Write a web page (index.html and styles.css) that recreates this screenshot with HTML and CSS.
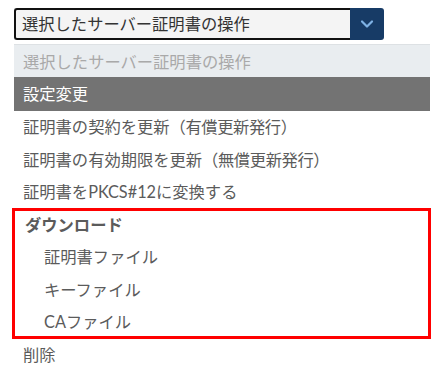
FILE: index.html
```html
<!DOCTYPE html>
<html lang="ja">
<head>
<meta charset="utf-8">
<link rel="stylesheet" href="styles.css">
</head>
<body>
<div class="page">
  <div class="select">
    <div class="select-value">選択したサーバー証明書の操作</div>
    <div class="select-btn">
      <svg width="14" height="10" viewBox="0 0 14 10"><path d="M2 2.5 L7 7.5 L12 2.5" fill="none" stroke="#7fb2e5" stroke-width="2.2" stroke-linecap="round" stroke-linejoin="round"/></svg>
    </div>
  </div>
  <div class="list">
    <div class="row placeholder">選択したサーバー証明書の操作</div>
    <div class="row header">設定変更</div>
    <div class="row item">証明書の契約を更新<span class="pal">（有償更新発行）</span></div>
    <div class="row item">証明書の有効期限を更新<span class="pal">（無償更新発行）</span></div>
    <div class="row item">証明書をPKCS#12に変換する</div>
    <div class="group">
      <div class="row group-title">ダウンロード</div>
      <div class="row sub">証明書ファイル</div>
      <div class="row sub">キーファイル</div>
      <div class="row sub">CAファイル</div>
    </div>
    <div class="row item">削除</div>
  </div>
</div>
</body>
</html>
```

FILE: styles.css
```css
html, body {
  margin: 0;
  padding: 0;
  background: #ffffff;
}
body {
  font-family: "Lato", "Noto Sans CJK JP", sans-serif;
  font-size: 16.3px;
  color: #5b5b5b;
}
.page {
  padding: 8px 10px 0 14px;
}
.select {
  display: flex;
  width: 370px;
  height: 32px;
}
.select-value {
  flex: 1;
  box-sizing: border-box;
  border: 2px solid #111;
  border-right: none;
  border-radius: 3px 0 0 3px;
  background: #f4f4f4;
  color: #333;
  padding-left: 6px;
  line-height: 28px;
  white-space: nowrap;
}
.select-btn {
  width: 34px;
  background: #173b66;
  border-radius: 0 3px 3px 0;
  display: flex;
  align-items: center;
  justify-content: center;
}
.list {
  margin-top: 4px;
  width: 416px;
}
.row {
  height: 32.5px;
  line-height: 32.5px;
  padding-left: 9px;
  white-space: nowrap;
}
.pal {
  letter-spacing: -0.4px;
}
.placeholder {
  height: 33px;
  line-height: 33px;
  background: #e9edf0;
  border-top: 1px solid #dde1e4;
  box-sizing: border-box;
  color: #a9a9a9;
}
.header {
  height: 34px;
  line-height: 34px;
  background: #737373;
  color: #ffffff;
}
.group {
  position: relative;
}
.group::after {
  content: "";
  position: absolute;
  left: -2px;
  right: -1px;
  top: -1px;
  bottom: 0;
  border: 3px solid #ff0000;
  pointer-events: none;
}
.group-title {
  font-weight: bold;
  padding-left: 11px;
}
.sub {
  padding-left: 30px;
}
```
